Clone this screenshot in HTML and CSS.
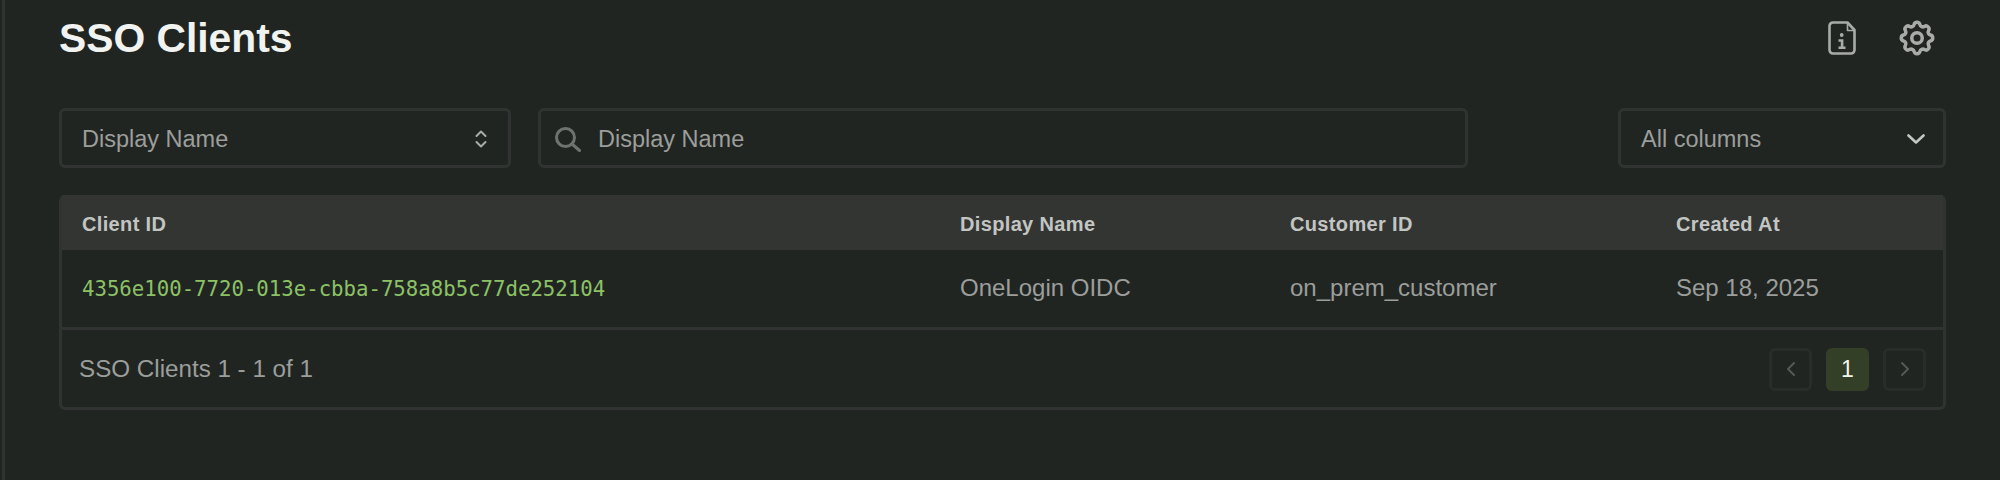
FILE: index.html
```html
<!DOCTYPE html>
<html lang="en">
<head>
    <meta charset="UTF-8">
    <title>SSO Clients</title>
    <link rel="stylesheet" href="styles.css">
</head>
<body>
    <div class="page">
        <div class="title-row">
            <h1>SSO Clients</h1>
            <div class="title-icons">
                <svg class="doc-icon" viewBox="0 0 28 34" fill="none" stroke="currentColor" stroke-width="2.6" stroke-linejoin="round">
                    <path d="M5 1.5h14.5l7 7.5v20a3.5 3.5 0 0 1-3.5 3.5H5A3.5 3.5 0 0 1 1.5 29V5A3.5 3.5 0 0 1 5 1.5z"/>
                    <path d="M19.5 2v7.5h6.5" stroke-width="1.6"/>
                    <circle cx="13.7" cy="14" r="1.9" fill="currentColor" stroke="none"/>
                    <path d="M10.5 19.5h3.6v7M10.5 26.8h7" stroke-linejoin="miter"/>
                </svg>
                <svg class="gear-icon" viewBox="0 0 24 24" fill="none" stroke="currentColor" stroke-width="2" stroke-linecap="round" stroke-linejoin="round">
                    <path d="M10.325 4.317c.426 -1.756 2.924 -1.756 3.35 0a1.724 1.724 0 0 0 2.573 1.066c1.543 -.94 3.31 .826 2.37 2.37a1.724 1.724 0 0 0 1.065 2.572c1.756 .426 1.756 2.924 0 3.35a1.724 1.724 0 0 0 -1.066 2.573c.94 1.543 -.826 3.31 -2.37 2.37a1.724 1.724 0 0 0 -2.572 1.065c-.426 1.756 -2.924 1.756 -3.35 0a1.724 1.724 0 0 0 -2.573 -1.066c-1.543 .94 -3.31 -.826 -2.37 -2.37a1.724 1.724 0 0 0 -1.065 -2.572c-1.756 -.426 -1.756 -2.924 0 -3.35a1.724 1.724 0 0 0 1.066 -2.573c-.94 -1.543 .826 -3.31 2.37 -2.37c1 .608 2.296 .07 2.572 -1.065"/>
                    <circle cx="12" cy="12" r="3"/>
                </svg>
            </div>
        </div>

        <div class="toolbar">
            <div class="field field-select">
                <span>Display Name</span>
                <svg class="updown-icon" viewBox="0 0 14 20" fill="none" stroke="currentColor" stroke-width="2" stroke-linecap="round" stroke-linejoin="round">
                    <path d="M2.5 7L7 2.5 11.5 7M2.5 13L7 17.5 11.5 13"/>
                </svg>
            </div>
            <div class="field field-search">
                <svg class="search-icon" viewBox="0 0 26 25" fill="none" stroke="currentColor" stroke-width="3" stroke-linecap="round">
                    <circle cx="10.5" cy="10.5" r="9"/>
                    <path d="M17 17l7.5 6.5"/>
                </svg>
                <span>Display Name</span>
            </div>
            <div class="field field-columns">
                <span>All columns</span>
                <svg class="down-icon" viewBox="0 0 18 10" fill="none" stroke="currentColor" stroke-width="2.6" stroke-linecap="round" stroke-linejoin="round">
                    <path d="M1.5 1.5L9 8.5l7.5-7"/>
                </svg>
            </div>
        </div>

        <div class="table-wrap">
            <table>
                <thead>
                    <tr>
                        <th class="col-id">Client ID</th>
                        <th class="col-name">Display Name</th>
                        <th class="col-customer">Customer ID</th>
                        <th>Created At</th>
                    </tr>
                </thead>
                <tbody>
                    <tr>
                        <td class="client-id">4356e100-7720-013e-cbba-758a8b5c77de252104</td>
                        <td>OneLogin OIDC</td>
                        <td>on_prem_customer</td>
                        <td>Sep 18, 2025</td>
                    </tr>
                </tbody>
            </table>
            <div class="table-footer">
                <span>SSO Clients 1 - 1 of 1</span>
                <div class="pager">
                    <button class="page-btn">
                        <svg viewBox="0 0 10 16" fill="none" stroke="currentColor" stroke-width="2" stroke-linecap="round" stroke-linejoin="round"><path d="M8 2L2 8l6 6"/></svg>
                    </button>
                    <button class="page-btn active">1</button>
                    <button class="page-btn">
                        <svg viewBox="0 0 10 16" fill="none" stroke="currentColor" stroke-width="2" stroke-linecap="round" stroke-linejoin="round"><path d="M2 2l6 6-6 6"/></svg>
                    </button>
                </div>
            </div>
        </div>
    </div>
</body>
</html>
```

FILE: styles.css
```css
* {
    box-sizing: border-box;
}
body {
    margin: 0;
    background-color: #212522;
    font-family: "Liberation Sans", Arial, sans-serif;
    color: #9b9e9b;
}
.page {
    height: 480px;
    margin-left: 2px;
    padding: 0 54px;
    border-left: 3px solid #303331;
    overflow: hidden;
}
.title-row {
    display: flex;
    justify-content: space-between;
    align-items: center;
    height: 76px;
}
h1 {
    margin: 0;
    font-size: 40.8px;
    font-weight: bold;
    color: #f1f3f1;
}
.title-icons {
    display: flex;
    align-items: center;
    gap: 44px;
    margin-right: 12px;
    color: #a9aba9;
}
.doc-icon {
    width: 28px;
    height: 34px;
}
.gear-icon {
    width: 42px;
    height: 42px;
    margin: 0 -4px;
}
.toolbar {
    display: flex;
    margin-top: 32px;
}
.field {
    display: flex;
    align-items: center;
    height: 60px;
    padding: 2px 20px 0;
    border: 3px solid #303331;
    border-radius: 6px;
    font-size: 23.5px;
}
.field-select {
    justify-content: space-between;
    width: 452px;
    margin-right: 27px;
    padding-right: 20px;
}
.field-search {
    width: 930px;
    padding-left: 14px;
}
.field-columns {
    justify-content: space-between;
    width: 328px;
    margin-left: auto;
    padding-right: 18px;
}
.updown-icon {
    width: 14px;
    height: 20px;
    color: #a9aba9;
}
.search-icon {
    width: 26px;
    height: 25px;
    margin-right: 17px;
    color: #6f736f;
}
.down-icon {
    width: 18px;
    height: 10px;
    color: #c4c6c4;
}
.table-wrap {
    margin-top: 27px;
    height: 215px;
    border: 3px solid #303331;
    border-top: 0;
    border-radius: 6px;
}
table {
    width: 100%;
    border-collapse: collapse;
    table-layout: fixed;
}
th {
    height: 55px;
    padding: 3px 0 0 20px;
    background-color: #333533;
    color: #c3c5c3;
    font-size: 20px;
    letter-spacing: 0.35px;
    text-align: left;
}
td {
    height: 78px;
    padding: 0 0 0 20px;
    border-bottom: 3px solid #303331;
    font-size: 24px;
}
.col-id {
    width: 878px;
}
.col-name {
    width: 330px;
}
.col-customer {
    width: 386px;
}
td.client-id {
    padding-top: 2px;
    font-family: "DejaVu Sans Mono", monospace;
    font-size: 20.7px;
    color: #8cc265;
}
.table-footer {
    display: flex;
    justify-content: space-between;
    align-items: center;
    height: 79px;
    padding: 0 17px;
    font-size: 24.2px;
}
.pager {
    display: flex;
    gap: 14px;
}
.page-btn {
    display: flex;
    justify-content: center;
    align-items: center;
    width: 43px;
    height: 43px;
    padding: 0;
    border: 3px solid #292d2a;
    border-radius: 6px;
    background: none;
    color: #555855;
    font-family: inherit;
    font-size: 23px;
}
.page-btn svg {
    width: 10px;
    height: 16px;
}
.page-btn.active {
    border: 0;
    background-color: #333f27;
    color: #f2f7ee;
}
```
